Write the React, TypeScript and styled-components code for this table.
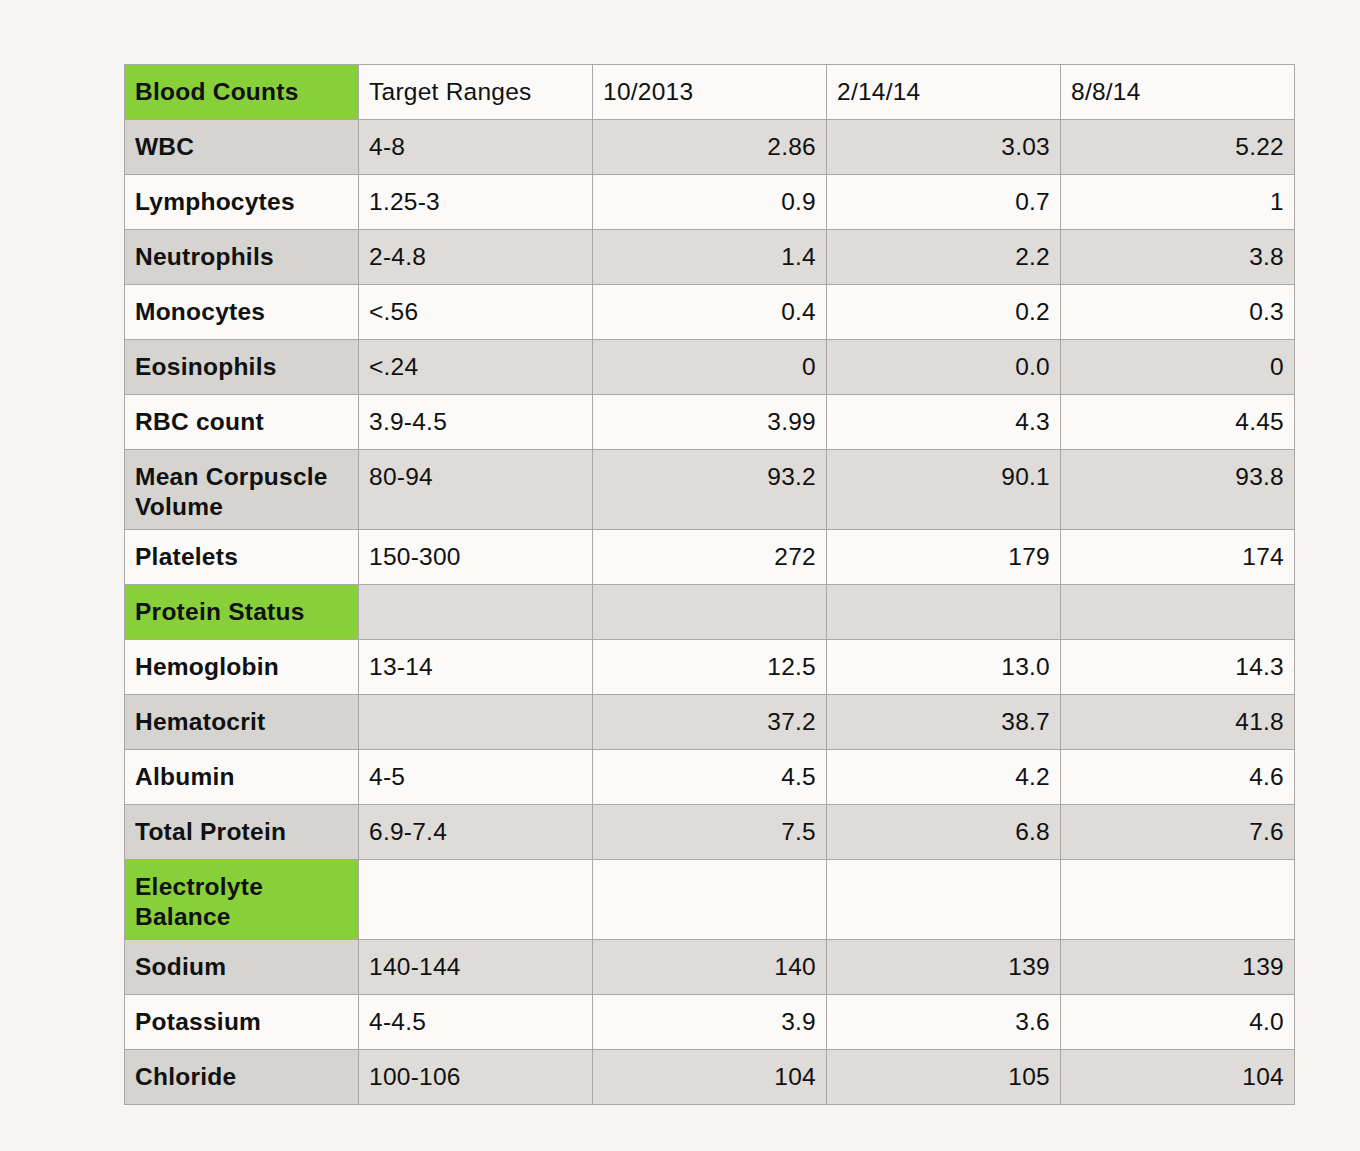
import React from "react";
import styled, { createGlobalStyle } from "styled-components";

const GlobalStyle = createGlobalStyle`
  html, body {
    margin: 0;
    padding: 0;
    background: #f6f5f4;
  }
  body {
    font-family: "Liberation Sans", Arial, Helvetica, sans-serif;
    color: #111;
  }
`;

const Page = styled.main`
  min-height: 1151px;
  padding: 64px 0 0 124px;
  box-sizing: border-box;
`;

const Grid = styled.div`
  display: grid;
  grid-template-columns: repeat(5, 233px);
  gap: 1px;
  width: max-content;
  background: #a9a8a7;
  border: 1px solid #a9a8a7;
`;

type Tone = "white" | "gray" | "label" | "green";

const tones: Record<Tone, string> = {
  white: "#fbfaf9",
  gray: "#dedbd8",
  label: "#d5d4d0",
  green: "#88d03a",
};

const Cell = styled.div<{ $tone: Tone; $right?: boolean; $bold?: boolean }>`
  box-sizing: border-box;
  min-height: 54px;
  padding: 12px 10px 7px 10px;
  font-size: 24.5px;
  letter-spacing: 0.25px;
  line-height: 30px;
  font-weight: ${({ $bold }) => ($bold ? 700 : 400)};
  text-align: ${({ $right }) => ($right ? "right" : "left")};
  background: ${({ $tone }) => tones[$tone]};
`;

type Row = { label: string; range: string; values: string[]; section?: boolean };

const rows: Row[] = [
  { label: "WBC", range: "4-8", values: ["2.86", "3.03", "5.22"] },
  { label: "Lymphocytes", range: "1.25-3", values: ["0.9", "0.7", "1"] },
  { label: "Neutrophils", range: "2-4.8", values: ["1.4", "2.2", "3.8"] },
  { label: "Monocytes", range: "<.56", values: ["0.4", "0.2", "0.3"] },
  { label: "Eosinophils", range: "<.24", values: ["0", "0.0", "0"] },
  { label: "RBC count", range: "3.9-4.5", values: ["3.99", "4.3", "4.45"] },
  { label: "Mean Corpuscle Volume", range: "80-94", values: ["93.2", "90.1", "93.8"] },
  { label: "Platelets", range: "150-300", values: ["272", "179", "174"] },
  { label: "Protein Status", range: "", values: ["", "", ""], section: true },
  { label: "Hemoglobin", range: "13-14", values: ["12.5", "13.0", "14.3"] },
  { label: "Hematocrit", range: "", values: ["37.2", "38.7", "41.8"] },
  { label: "Albumin", range: "4-5", values: ["4.5", "4.2", "4.6"] },
  { label: "Total Protein", range: "6.9-7.4", values: ["7.5", "6.8", "7.6"] },
  { label: "Electrolyte Balance", range: "", values: ["", "", ""], section: true },
  { label: "Sodium", range: "140-144", values: ["140", "139", "139"] },
  { label: "Potassium", range: "4-4.5", values: ["3.9", "3.6", "4.0"] },
  { label: "Chloride", range: "100-106", values: ["104", "105", "104"] },
];

const headers = ["Target Ranges", "10/2013", "2/14/14", "8/8/14"];

const App: React.FC = () => {
  return (
    <>
      <GlobalStyle />
      <Page>
        <Grid>
          <Cell $tone="green" $bold>Blood Counts</Cell>
          {headers.map((h) => (
            <Cell key={h} $tone="white">{h}</Cell>
          ))}
          {rows.map((row, i) => {
            const shaded = i % 2 === 0;
            const tone: Tone = shaded ? "gray" : "white";
            return (
              <React.Fragment key={row.label}>
                <Cell $tone={row.section ? "green" : shaded ? "label" : "white"} $bold>
                  {row.label}
                </Cell>
                <Cell $tone={tone}>{row.range}</Cell>
                {row.values.map((v, j) => (
                  <Cell key={j} $tone={tone} $right>{v}</Cell>
                ))}
              </React.Fragment>
            );
          })}
        </Grid>
      </Page>
    </>
  );
};

export default App;
